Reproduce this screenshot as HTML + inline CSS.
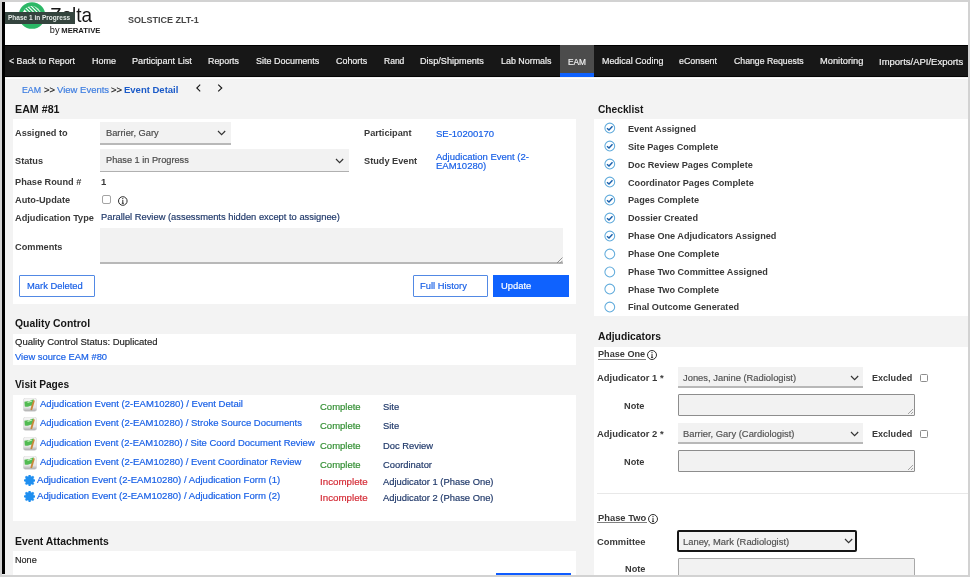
<!DOCTYPE html>
<html><head><meta charset="utf-8"><style>
*{margin:0;padding:0;box-sizing:border-box}
html,body{width:970px;height:577px;overflow:hidden;background:#d2d2d2;font-family:"Liberation Sans",sans-serif}
.t{position:absolute;white-space:nowrap;line-height:1;will-change:transform}
.b{position:absolute}
</style></head>
<body>
<div class="b" style="left:2px;top:2px;width:966px;height:573px;background:#f3f3f3;overflow:hidden"></div><div class="b" style="left:2px;top:2px;width:966px;height:43px;background:#fff"></div><div class="b" style="left:2px;top:2px;width:3px;height:572px;background:#000;z-index:5"></div><svg class="b" style="left:0;top:0;will-change:transform" width="120" height="45" viewBox="0 0 120 45">
<defs><clipPath id="cp"><rect x="2" y="2" width="118" height="43"/></clipPath>
<clipPath id="dome"><ellipse cx="31.8" cy="15" rx="9.3" ry="9"/></clipPath></defs>
<g clip-path="url(#cp)">
<circle cx="32" cy="15.5" r="13.3" fill="#2cb866"/>
<g clip-path="url(#dome)"><rect x="20" y="5" width="24" height="20" fill="#fff"/>
<path d="M20 4 L30 14 M23.6 4 L33.6 14 M27.2 4 L37.2 14 M30.8 4 L40.8 14 M34.4 4 L44.4 14" stroke="#2cb866" stroke-width="1.5"/></g>
<text x="49.9" y="21.5" font-family="Liberation Sans" font-size="20.8" fill="#161616" textLength="42.2" lengthAdjust="spacingAndGlyphs">Zelta</text>
<text x="49.8" y="32.8" font-family="Liberation Sans" font-size="9.2" fill="#111">by</text>
<text x="61.3" y="32.9" font-family="Liberation Sans" font-size="6.5" font-weight="bold" fill="#1a1a1a" textLength="39.1" lengthAdjust="spacingAndGlyphs">MERATIVE</text>
</g></svg><div class="b" style="left:4.9px;top:11.9px;width:70px;height:12px;background:#34443e;z-index:6"></div><div class="t" style="left:8.4px;top:14.50px;font-size:6.5px;font-weight:bold;color:#e6ebe8;z-index:7">Phase 1 in Progress</div>
<div class="t" style="left:127.9px;top:15.98px;font-size:9px;font-weight:bold;color:#454545;">SOLSTICE ZLT-1</div>
<div class="b" style="left:2px;top:44.6px;width:966px;height:32.8px;background:#171717;border-top:1px solid #000;border-bottom:1px solid #050505"></div><div class="b" style="left:2px;top:77.6px;width:966px;height:1.2px;background:#fff"></div><div class="b" style="left:560px;top:45px;width:34px;height:32px;background:#4c4c4c"></div><div class="b" style="left:560px;top:73px;width:34px;height:4px;background:#0f62fe"></div><div class="t" style="left:9px;top:57.13px;font-size:8.83px;-webkit-text-stroke:0.18px currentColor;color:#f0f0f0;">&lt; Back to Report</div>
<div class="t" style="left:91.5px;top:56.98px;font-size:9.0px;-webkit-text-stroke:0.18px currentColor;color:#f0f0f0;">Home</div>
<div class="t" style="left:132px;top:56.85px;font-size:9.15px;-webkit-text-stroke:0.18px currentColor;color:#f0f0f0;">Participant List</div>
<div class="t" style="left:208.2px;top:57.11px;font-size:8.85px;-webkit-text-stroke:0.18px currentColor;color:#f0f0f0;">Reports</div>
<div class="t" style="left:255.8px;top:57.00px;font-size:8.98px;-webkit-text-stroke:0.18px currentColor;color:#f0f0f0;">Site Documents</div>
<div class="t" style="left:335.7px;top:57.03px;font-size:8.94px;-webkit-text-stroke:0.18px currentColor;color:#f0f0f0;">Cohorts</div>
<div class="t" style="left:383.6px;top:57.38px;font-size:8.53px;-webkit-text-stroke:0.18px currentColor;color:#f0f0f0;">Rand</div>
<div class="t" style="left:420.2px;top:56.86px;font-size:9.14px;-webkit-text-stroke:0.18px currentColor;color:#f0f0f0;">Disp/Shipments</div>
<div class="t" style="left:500.7px;top:57.06px;font-size:8.91px;-webkit-text-stroke:0.18px currentColor;color:#f0f0f0;">Lab Normals</div>
<div class="t" style="left:568px;top:57.57px;font-size:8.31px;-webkit-text-stroke:0.18px currentColor;color:#f0f0f0;">EAM</div>
<div class="t" style="left:601.8px;top:57.06px;font-size:8.91px;-webkit-text-stroke:0.18px currentColor;color:#f0f0f0;">Medical Coding</div>
<div class="t" style="left:679.3px;top:57.08px;font-size:8.88px;-webkit-text-stroke:0.18px currentColor;color:#f0f0f0;">eConsent</div>
<div class="t" style="left:733.8px;top:57.23px;font-size:8.71px;-webkit-text-stroke:0.18px currentColor;color:#f0f0f0;">Change Requests</div>
<div class="t" style="left:819.5px;top:56.71px;font-size:9.32px;-webkit-text-stroke:0.18px currentColor;color:#f0f0f0;">Monitoring</div>
<div class="t" style="left:879px;top:56.58px;font-size:9.48px;-webkit-text-stroke:0.18px currentColor;color:#f0f0f0;">Imports/API/Exports</div>
<div class="t" style="left:22.3px;top:85.95px;font-size:8.8px;-webkit-text-stroke:0.18px currentColor;color:#3d7de0;">EAM</div>
<div class="t" style="left:43.7px;top:85.36px;font-size:9.5px;-webkit-text-stroke:0.18px currentColor;color:#262626;">&gt;&gt;</div>
<div class="t" style="left:56.7px;top:85.36px;font-size:9.5px;-webkit-text-stroke:0.18px currentColor;color:#3d7de0;">View Events</div>
<div class="t" style="left:110.8px;top:85.36px;font-size:9.5px;-webkit-text-stroke:0.18px currentColor;color:#262626;">&gt;&gt;</div>
<div class="t" style="left:124px;top:85.36px;font-size:9.5px;font-weight:bold;color:#1a5ac8;">Event Detail</div>
<svg class="b" style="left:194px;top:83px" width="32" height="12"><path d="M6.2 1.6 L2.8 5 L6.2 8.4 M24.2 1.6 L27.8 5 L24.2 8.4" stroke="#161616" stroke-width="1.1" fill="none"/></svg><div class="t" style="left:15.2px;top:104.04px;font-size:10.7px;font-weight:bold;color:#161616;">EAM #81</div>
<div class="b" style="left:13px;top:118.5px;width:562.5px;height:185px;background:#fff"></div><div class="t" style="left:15.2px;top:128.51px;font-size:9.2px;font-weight:bold;color:#393939;">Assigned to</div>
<div class="b" style="left:100px;top:121.5px;width:131px;height:23px;background:#f2f2f2;border-bottom:2px solid #b8b8b8"></div><div class="t" style="left:106px;top:128.63px;font-size:9.3px;-webkit-text-stroke:0.18px currentColor;color:#4a4a4a;">Barrier, Gary</div>
<svg class="b" style="left:217px;top:130px" width="10" height="7"><path d="M1 1 L4.6 4.6 L8.2 1" stroke="#333" stroke-width="1.15" fill="none"/></svg><div class="t" style="left:15.2px;top:156.51px;font-size:9.2px;font-weight:bold;color:#393939;">Status</div>
<div class="b" style="left:100px;top:149.3px;width:248.5px;height:22.7px;background:#f2f2f2;border-bottom:1.5px solid #b0b0b0"></div><div class="t" style="left:106px;top:156.41px;font-size:9.2px;-webkit-text-stroke:0.18px currentColor;color:#4a4a4a;">Phase 1 in Progress</div>
<svg class="b" style="left:335px;top:157.5px" width="10" height="7"><path d="M1 1 L4.6 4.6 L8.2 1" stroke="#333" stroke-width="1.15" fill="none"/></svg><div class="t" style="left:363.5px;top:129.41px;font-size:9.2px;font-weight:bold;color:#393939;">Participant</div>
<div class="t" style="left:436px;top:128.56px;font-size:9.5px;-webkit-text-stroke:0.18px currentColor;color:#175fe6;">SE-10200170</div>
<div class="t" style="left:363.5px;top:157.31px;font-size:9.2px;font-weight:bold;color:#393939;">Study Event</div>
<div class="t" style="left:436px;top:151.96px;font-size:9.5px;-webkit-text-stroke:0.18px currentColor;color:#175fe6;">Adjudication Event (2-</div>
<div class="t" style="left:436px;top:160.66px;font-size:9.5px;-webkit-text-stroke:0.18px currentColor;color:#175fe6;">EAM10280)</div>
<div class="t" style="left:15.2px;top:177.71px;font-size:9.2px;font-weight:bold;color:#393939;">Phase Round #</div>
<div class="t" style="left:100.7px;top:177.46px;font-size:9.5px;font-weight:bold;color:#393939;">1</div>
<div class="t" style="left:15.2px;top:196.01px;font-size:9.2px;font-weight:bold;color:#393939;">Auto-Update</div>
<div class="b" style="left:102.2px;top:195px;width:8.7px;height:8.7px;border:1px solid #a4a4a4;border-radius:2px;background:#fff"></div><svg class="b" style="left:117px;top:195px" width="12" height="12"><circle cx="5.8" cy="6" r="4.3" stroke="#161616" stroke-width="0.9" fill="none"/><path d="M5.8 4.9 V8.2 M4.8 8.3 H6.9" stroke="#161616" stroke-width="0.9"/><circle cx="5.8" cy="3.6" r="0.6" fill="#161616"/></svg><div class="t" style="left:15.2px;top:213.71px;font-size:9.2px;font-weight:bold;color:#393939;">Adjudication Type</div>
<div class="t" style="left:100.7px;top:212.98px;font-size:9.36px;-webkit-text-stroke:0.18px currentColor;color:#20396a;">Parallel Review (assessments hidden except to assignee)</div>
<div class="t" style="left:15.2px;top:242.61px;font-size:9.2px;font-weight:bold;color:#393939;">Comments</div>
<div class="b" style="left:100px;top:227.6px;width:462.8px;height:36.2px;background:#f2f2f2;border-bottom:2px solid #b8b8b8"></div><svg class="b" style="left:555px;top:256px" width="8" height="8"><path d="M7.5 1.5 L2 7 M7.5 4.8 L5 7.3" stroke="#888" stroke-width="0.9"/></svg><div class="b" style="left:19.2px;top:274.5px;width:75.7px;height:22px;border:1px solid #5289e4;border-radius:1px;background:#fff"></div><div class="t" style="left:26.5px;top:281.34px;font-size:9.4px;-webkit-text-stroke:0.18px currentColor;color:#175fe6;">Mark Deleted</div>
<div class="b" style="left:412.6px;top:274.5px;width:75.4px;height:22px;border:1px solid #5289e4;border-radius:1px;background:#fff"></div><div class="t" style="left:420.4px;top:281.34px;font-size:9.4px;-webkit-text-stroke:0.18px currentColor;color:#175fe6;">Full History</div>
<div class="b" style="left:493.2px;top:274.8px;width:75.7px;height:21.8px;background:#0f62fe"></div><div class="t" style="left:500.8px;top:281.34px;font-size:9.4px;-webkit-text-stroke:0.18px currentColor;color:#fff;">Update</div>
<div class="t" style="left:15.3px;top:319.10px;font-size:10.4px;font-weight:bold;color:#161616;">Quality Control</div>
<div class="b" style="left:13px;top:334px;width:562.5px;height:30.5px;background:#fff"></div><div class="t" style="left:15.3px;top:337.46px;font-size:9.5px;-webkit-text-stroke:0.18px currentColor;color:#262626;">Quality Control Status: Duplicated</div>
<div class="t" style="left:15.3px;top:352.34px;font-size:9.4px;-webkit-text-stroke:0.18px currentColor;color:#175fe6;">View source EAM #80</div>
<div class="t" style="left:15.3px;top:380.17px;font-size:10.2px;font-weight:bold;color:#161616;">Visit Pages</div>
<div class="b" style="left:13px;top:394.5px;width:562.5px;height:126.3px;background:#fff"></div><svg class="b" style="left:23.2px;top:398px" width="14" height="14" viewBox="0 0 14 14"><defs><linearGradient id="fg398" x1="0" y1="0" x2="0" y2="1"><stop offset="0" stop-color="#f6f6f6"/><stop offset="0.7" stop-color="#e6e6e6"/><stop offset="1" stop-color="#aaaaaa"/></linearGradient></defs><rect x="0.4" y="0.2" width="13.2" height="13.1" rx="2" fill="url(#fg398)" stroke="#cfcfcf" stroke-width="0.5"/><path d="M1.4 3.8 Q4 2.8 6 3.4 Q8.2 1.8 10.8 1.6 L9.6 7.6 Q7.5 7.6 5.6 8.6 Q3.5 8.8 1.8 8.4 Z" fill="#52bb52"/><path d="M4.5 4.6 Q7 3.6 9 3" stroke="#c0f0b8" stroke-width="1.1" fill="none"/><path d="M10.6 1.8 Q12 2.2 11.6 3.6 L9.2 11.8 Q8.4 12.6 7.4 11.8 L8.6 7 Z" fill="#c9873a"/></svg><div class="t" style="left:39.7px;top:398.62px;font-size:9.54px;-webkit-text-stroke:0.18px currentColor;color:#175fe6;">Adjudication Event (2-EAM10280) / Event Detail</div>
<div class="t" style="left:320.1px;top:401.76px;font-size:9.5px;-webkit-text-stroke:0.18px currentColor;color:#338f33;">Complete</div>
<div class="t" style="left:383.2px;top:401.84px;font-size:9.4px;-webkit-text-stroke:0.18px currentColor;color:#20396a;">Site</div>
<svg class="b" style="left:23.2px;top:417px" width="14" height="14" viewBox="0 0 14 14"><defs><linearGradient id="fg417" x1="0" y1="0" x2="0" y2="1"><stop offset="0" stop-color="#f6f6f6"/><stop offset="0.7" stop-color="#e6e6e6"/><stop offset="1" stop-color="#aaaaaa"/></linearGradient></defs><rect x="0.4" y="0.2" width="13.2" height="13.1" rx="2" fill="url(#fg417)" stroke="#cfcfcf" stroke-width="0.5"/><path d="M1.4 3.8 Q4 2.8 6 3.4 Q8.2 1.8 10.8 1.6 L9.6 7.6 Q7.5 7.6 5.6 8.6 Q3.5 8.8 1.8 8.4 Z" fill="#52bb52"/><path d="M4.5 4.6 Q7 3.6 9 3" stroke="#c0f0b8" stroke-width="1.1" fill="none"/><path d="M10.6 1.8 Q12 2.2 11.6 3.6 L9.2 11.8 Q8.4 12.6 7.4 11.8 L8.6 7 Z" fill="#c9873a"/></svg><div class="t" style="left:39.7px;top:417.76px;font-size:9.5px;-webkit-text-stroke:0.18px currentColor;color:#175fe6;">Adjudication Event (2-EAM10280) / Stroke Source Documents</div>
<div class="t" style="left:320.1px;top:421.06px;font-size:9.5px;-webkit-text-stroke:0.18px currentColor;color:#338f33;">Complete</div>
<div class="t" style="left:383.2px;top:421.14px;font-size:9.4px;-webkit-text-stroke:0.18px currentColor;color:#20396a;">Site</div>
<svg class="b" style="left:23.2px;top:436.6px" width="14" height="14" viewBox="0 0 14 14"><defs><linearGradient id="fg436" x1="0" y1="0" x2="0" y2="1"><stop offset="0" stop-color="#f6f6f6"/><stop offset="0.7" stop-color="#e6e6e6"/><stop offset="1" stop-color="#aaaaaa"/></linearGradient></defs><rect x="0.4" y="0.2" width="13.2" height="13.1" rx="2" fill="url(#fg436)" stroke="#cfcfcf" stroke-width="0.5"/><path d="M1.4 3.8 Q4 2.8 6 3.4 Q8.2 1.8 10.8 1.6 L9.6 7.6 Q7.5 7.6 5.6 8.6 Q3.5 8.8 1.8 8.4 Z" fill="#52bb52"/><path d="M4.5 4.6 Q7 3.6 9 3" stroke="#c0f0b8" stroke-width="1.1" fill="none"/><path d="M10.6 1.8 Q12 2.2 11.6 3.6 L9.2 11.8 Q8.4 12.6 7.4 11.8 L8.6 7 Z" fill="#c9873a"/></svg><div class="t" style="left:39.7px;top:437.68px;font-size:9.47px;-webkit-text-stroke:0.18px currentColor;color:#175fe6;">Adjudication Event (2-EAM10280) / Site Coord Document Review</div>
<div class="t" style="left:320.1px;top:440.66px;font-size:9.5px;-webkit-text-stroke:0.18px currentColor;color:#338f33;">Complete</div>
<div class="t" style="left:383.2px;top:440.74px;font-size:9.4px;-webkit-text-stroke:0.18px currentColor;color:#20396a;">Doc Review</div>
<svg class="b" style="left:23.2px;top:456px" width="14" height="14" viewBox="0 0 14 14"><defs><linearGradient id="fg456" x1="0" y1="0" x2="0" y2="1"><stop offset="0" stop-color="#f6f6f6"/><stop offset="0.7" stop-color="#e6e6e6"/><stop offset="1" stop-color="#aaaaaa"/></linearGradient></defs><rect x="0.4" y="0.2" width="13.2" height="13.1" rx="2" fill="url(#fg456)" stroke="#cfcfcf" stroke-width="0.5"/><path d="M1.4 3.8 Q4 2.8 6 3.4 Q8.2 1.8 10.8 1.6 L9.6 7.6 Q7.5 7.6 5.6 8.6 Q3.5 8.8 1.8 8.4 Z" fill="#52bb52"/><path d="M4.5 4.6 Q7 3.6 9 3" stroke="#c0f0b8" stroke-width="1.1" fill="none"/><path d="M10.6 1.8 Q12 2.2 11.6 3.6 L9.2 11.8 Q8.4 12.6 7.4 11.8 L8.6 7 Z" fill="#c9873a"/></svg><div class="t" style="left:39.7px;top:456.96px;font-size:9.5px;-webkit-text-stroke:0.18px currentColor;color:#175fe6;">Adjudication Event (2-EAM10280) / Event Coordinator Review</div>
<div class="t" style="left:320.1px;top:459.56px;font-size:9.5px;-webkit-text-stroke:0.18px currentColor;color:#338f33;">Complete</div>
<div class="t" style="left:383.2px;top:459.64px;font-size:9.4px;-webkit-text-stroke:0.18px currentColor;color:#20396a;">Coordinator</div>
<svg class="b" style="left:23.5px;top:474.9px" width="11.2" height="11" viewBox="0 0 11.2 11"><path d="M4.12 1.79 L4.93 -0.16 L6.27 -0.16 L7.08 1.79 L7.10 1.80 L9.06 0.99 L10.01 1.94 L9.20 3.90 L9.21 3.92 L11.16 4.73 L11.16 6.07 L9.21 6.88 L9.20 6.90 L10.01 8.86 L9.06 9.81 L7.10 9.00 L7.08 9.01 L6.27 10.96 L4.93 10.96 L4.12 9.01 L4.10 9.00 L2.14 9.81 L1.19 8.86 L2.00 6.90 L1.99 6.88 L0.04 6.07 L0.04 4.73 L1.99 3.92 L2.00 3.90 L1.19 1.94 L2.14 0.99 L4.10 1.80 Z" fill="#1f8ff0" stroke="#1f8ff0" stroke-width="0.3" stroke-linejoin="round"/></svg><div class="t" style="left:37.2px;top:474.98px;font-size:9.59px;-webkit-text-stroke:0.18px currentColor;color:#175fe6;">Adjudication Event (2-EAM10280) / Adjudication Form (1)</div>
<div class="t" style="left:320.1px;top:476.65px;font-size:9.75px;-webkit-text-stroke:0.18px currentColor;color:#d42a35;">Incomplete</div>
<div class="t" style="left:383.2px;top:476.74px;font-size:9.4px;-webkit-text-stroke:0.18px currentColor;color:#20396a;">Adjudicator 1 (Phase One)</div>
<svg class="b" style="left:23.5px;top:491.4px" width="11.2" height="11" viewBox="0 0 11.2 11"><path d="M4.12 1.79 L4.93 -0.16 L6.27 -0.16 L7.08 1.79 L7.10 1.80 L9.06 0.99 L10.01 1.94 L9.20 3.90 L9.21 3.92 L11.16 4.73 L11.16 6.07 L9.21 6.88 L9.20 6.90 L10.01 8.86 L9.06 9.81 L7.10 9.00 L7.08 9.01 L6.27 10.96 L4.93 10.96 L4.12 9.01 L4.10 9.00 L2.14 9.81 L1.19 8.86 L2.00 6.90 L1.99 6.88 L0.04 6.07 L0.04 4.73 L1.99 3.92 L2.00 3.90 L1.19 1.94 L2.14 0.99 L4.10 1.80 Z" fill="#1f8ff0" stroke="#1f8ff0" stroke-width="0.3" stroke-linejoin="round"/></svg><div class="t" style="left:37.2px;top:491.18px;font-size:9.59px;-webkit-text-stroke:0.18px currentColor;color:#175fe6;">Adjudication Event (2-EAM10280) / Adjudication Form (2)</div>
<div class="t" style="left:320.1px;top:493.25px;font-size:9.75px;-webkit-text-stroke:0.18px currentColor;color:#d42a35;">Incomplete</div>
<div class="t" style="left:383.2px;top:493.34px;font-size:9.4px;-webkit-text-stroke:0.18px currentColor;color:#20396a;">Adjudicator 2 (Phase One)</div>
<div class="t" style="left:15.3px;top:536.90px;font-size:10.4px;font-weight:bold;color:#161616;">Event Attachments</div>
<div class="b" style="left:13px;top:551px;width:562.5px;height:30px;background:#fff"></div><div class="t" style="left:15.3px;top:555.70px;font-size:9.1px;-webkit-text-stroke:0.18px currentColor;color:#262626;">None</div>
<div class="b" style="left:496px;top:573.2px;width:75px;height:2px;background:#0f5cff"></div><div class="t" style="left:597.5px;top:104.77px;font-size:10.2px;font-weight:bold;color:#161616;">Checklist</div>
<div class="b" style="left:594.4px;top:119px;width:374px;height:197px;background:#fff"></div><svg class="b" style="left:603px;top:122.10px" width="13" height="12"><circle cx="6.8" cy="6" r="4.9" stroke="#62acdc" stroke-width="1.05" fill="none"/><path d="M4.0 6.2 L6.0 8.0 L9.5 4.3" stroke="#1a60ac" stroke-width="1.45" fill="none"/></svg><div class="t" style="left:628.1px;top:125.05px;font-size:9.15px;font-weight:bold;color:#393939;">Event Assigned</div>
<svg class="b" style="left:603px;top:140.03px" width="13" height="12"><circle cx="6.8" cy="6" r="4.9" stroke="#62acdc" stroke-width="1.05" fill="none"/><path d="M4.0 6.2 L6.0 8.0 L9.5 4.3" stroke="#1a60ac" stroke-width="1.45" fill="none"/></svg><div class="t" style="left:628.1px;top:142.89px;font-size:9.15px;font-weight:bold;color:#393939;">Site Pages Complete</div>
<svg class="b" style="left:603px;top:157.96px" width="13" height="12"><circle cx="6.8" cy="6" r="4.9" stroke="#62acdc" stroke-width="1.05" fill="none"/><path d="M4.0 6.2 L6.0 8.0 L9.5 4.3" stroke="#1a60ac" stroke-width="1.45" fill="none"/></svg><div class="t" style="left:628.1px;top:160.73px;font-size:9.15px;font-weight:bold;color:#393939;">Doc Review Pages Complete</div>
<svg class="b" style="left:603px;top:175.89px" width="13" height="12"><circle cx="6.8" cy="6" r="4.9" stroke="#62acdc" stroke-width="1.05" fill="none"/><path d="M4.0 6.2 L6.0 8.0 L9.5 4.3" stroke="#1a60ac" stroke-width="1.45" fill="none"/></svg><div class="t" style="left:628.1px;top:178.57px;font-size:9.15px;font-weight:bold;color:#393939;">Coordinator Pages Complete</div>
<svg class="b" style="left:603px;top:193.82px" width="13" height="12"><circle cx="6.8" cy="6" r="4.9" stroke="#62acdc" stroke-width="1.05" fill="none"/><path d="M4.0 6.2 L6.0 8.0 L9.5 4.3" stroke="#1a60ac" stroke-width="1.45" fill="none"/></svg><div class="t" style="left:628.1px;top:196.41px;font-size:9.15px;font-weight:bold;color:#393939;">Pages Complete</div>
<svg class="b" style="left:603px;top:211.75px" width="13" height="12"><circle cx="6.8" cy="6" r="4.9" stroke="#62acdc" stroke-width="1.05" fill="none"/><path d="M4.0 6.2 L6.0 8.0 L9.5 4.3" stroke="#1a60ac" stroke-width="1.45" fill="none"/></svg><div class="t" style="left:628.1px;top:214.25px;font-size:9.15px;font-weight:bold;color:#393939;">Dossier Created</div>
<svg class="b" style="left:603px;top:229.68px" width="13" height="12"><circle cx="6.8" cy="6" r="4.9" stroke="#62acdc" stroke-width="1.05" fill="none"/><path d="M4.0 6.2 L6.0 8.0 L9.5 4.3" stroke="#1a60ac" stroke-width="1.45" fill="none"/></svg><div class="t" style="left:628.1px;top:232.09px;font-size:9.15px;font-weight:bold;color:#393939;">Phase One Adjudicators Assigned</div>
<svg class="b" style="left:603px;top:247.61px" width="13" height="12"><circle cx="6.8" cy="6" r="4.9" stroke="#62acdc" stroke-width="1.05" fill="none"/></svg><div class="t" style="left:628.1px;top:249.93px;font-size:9.15px;font-weight:bold;color:#393939;">Phase One Complete</div>
<svg class="b" style="left:603px;top:265.54px" width="13" height="12"><circle cx="6.8" cy="6" r="4.9" stroke="#62acdc" stroke-width="1.05" fill="none"/></svg><div class="t" style="left:628.1px;top:267.77px;font-size:9.15px;font-weight:bold;color:#393939;">Phase Two Committee Assigned</div>
<svg class="b" style="left:603px;top:283.47px" width="13" height="12"><circle cx="6.8" cy="6" r="4.9" stroke="#62acdc" stroke-width="1.05" fill="none"/></svg><div class="t" style="left:628.1px;top:285.61px;font-size:9.15px;font-weight:bold;color:#393939;">Phase Two Complete</div>
<svg class="b" style="left:603px;top:301.40px" width="13" height="12"><circle cx="6.8" cy="6" r="4.9" stroke="#62acdc" stroke-width="1.05" fill="none"/></svg><div class="t" style="left:628.1px;top:303.45px;font-size:9.15px;font-weight:bold;color:#393939;">Final Outcome Generated</div>
<div class="t" style="left:597.6px;top:331.98px;font-size:10.3px;font-weight:bold;color:#161616;">Adjudicators</div>
<div class="b" style="left:594.4px;top:346.5px;width:374px;height:240px;background:#fff"></div><div class="t" style="left:597.5px;top:349.85px;font-size:9.15px;font-weight:bold;color:#393939;">Phase One</div>
<div class="b" style="left:597.5px;top:358.6px;width:48.5px;height:0.9px;background:#808080"></div><svg class="b" style="left:645.8px;top:348.9px" width="12" height="12"><circle cx="6" cy="6" r="4.5" stroke="#161616" stroke-width="0.9" fill="none"/><path d="M6 5 V8.3 M5 8.4 H7.1" stroke="#161616" stroke-width="0.9"/><circle cx="6" cy="3.7" r="0.6" fill="#161616"/></svg><div class="t" style="left:596.9px;top:373.40px;font-size:9.45px;font-weight:bold;color:#393939;">Adjudicator 1 *</div>
<div class="b" style="left:678px;top:366.5px;width:185px;height:21.5px;background:#f2f2f2;border-bottom:2px solid #b8b8b8"></div><div class="t" style="left:683.1px;top:373.04px;font-size:9.4px;-webkit-text-stroke:0.18px currentColor;color:#525252;">Jones, Janine (Radiologist)</div>
<svg class="b" style="left:850px;top:374.5px" width="10" height="7"><path d="M1 1 L4.6 4.6 L8.2 1" stroke="#333" stroke-width="1.15" fill="none"/></svg><div class="t" style="left:871.8px;top:373.94px;font-size:9.05px;font-weight:bold;color:#393939;">Excluded</div>
<div class="b" style="left:920.2px;top:373.5px;width:7.8px;height:8.2px;border:1px solid #8d8d8d;border-radius:1.5px;background:#fff"></div><div class="t" style="left:624.3px;top:401.81px;font-size:9.2px;font-weight:bold;color:#393939;">Note</div>
<div class="b" style="left:677.6px;top:394px;width:237px;height:21.5px;background:#f2f2f2;border:1px solid #8d8d8d;border-radius:1px"></div><svg class="b" style="left:906px;top:407px" width="8" height="8"><path d="M7 2 L2 7 M7 5 L5 7" stroke="#8d8d8d" stroke-width="0.8"/></svg><div class="t" style="left:596.9px;top:429.20px;font-size:9.45px;font-weight:bold;color:#393939;">Adjudicator 2 *</div>
<div class="b" style="left:678px;top:422.9px;width:185px;height:21.5px;background:#f2f2f2;border-bottom:2px solid #b8b8b8"></div><div class="t" style="left:683.1px;top:429.44px;font-size:9.4px;-webkit-text-stroke:0.18px currentColor;color:#525252;">Barrier, Gary (Cardiologist)</div>
<svg class="b" style="left:850px;top:430.9px" width="10" height="7"><path d="M1 1 L4.6 4.6 L8.2 1" stroke="#333" stroke-width="1.15" fill="none"/></svg><div class="t" style="left:871.8px;top:430.34px;font-size:9.05px;font-weight:bold;color:#393939;">Excluded</div>
<div class="b" style="left:920.2px;top:429.9px;width:7.8px;height:8.2px;border:1px solid #8d8d8d;border-radius:1.5px;background:#fff"></div><div class="t" style="left:624.3px;top:458.21px;font-size:9.2px;font-weight:bold;color:#393939;">Note</div>
<div class="b" style="left:677.6px;top:450.4px;width:237px;height:21.5px;background:#f2f2f2;border:1px solid #8d8d8d;border-radius:1px"></div><svg class="b" style="left:906px;top:463.4px" width="8" height="8"><path d="M7 2 L2 7 M7 5 L5 7" stroke="#8d8d8d" stroke-width="0.8"/></svg><div class="b" style="left:597px;top:493px;width:371px;height:1px;background:#e8e8e8"></div><div class="t" style="left:597.5px;top:514.09px;font-size:9.35px;font-weight:bold;color:#393939;">Phase Two</div>
<div class="b" style="left:597.3px;top:522.1px;width:49.5px;height:0.9px;background:#808080"></div><svg class="b" style="left:646.5px;top:513px" width="12" height="12"><circle cx="6" cy="6" r="4.5" stroke="#161616" stroke-width="0.9" fill="none"/><path d="M6 5 V8.3 M5 8.4 H7.1" stroke="#161616" stroke-width="0.9"/><circle cx="6" cy="3.7" r="0.6" fill="#161616"/></svg><div class="t" style="left:597px;top:536.74px;font-size:9.4px;font-weight:bold;color:#393939;">Committee</div>
<div class="b" style="left:677.4px;top:529.9px;width:180px;height:22.4px;background:#f2f2f2;border:2px solid #161616;border-radius:2px"></div><div class="t" style="left:683.3px;top:536.84px;font-size:9.4px;-webkit-text-stroke:0.18px currentColor;color:#525252;">Laney, Mark (Radiologist)</div>
<svg class="b" style="left:843.5px;top:538px" width="10" height="7"><path d="M1 1 L4.6 4.6 L8.2 1" stroke="#333" stroke-width="1.15" fill="none"/></svg><div class="t" style="left:624.5px;top:565.21px;font-size:9.2px;font-weight:bold;color:#393939;">Note</div>
<div class="b" style="left:677.6px;top:557.8px;width:237px;height:30px;background:#f2f2f2;border:1px solid #a8a8a8;border-radius:1px"></div><div class="b" style="left:0;top:575px;width:970px;height:2px;background:#d2d2d2;z-index:10"></div><div class="b" style="left:968px;top:0;width:2px;height:577px;background:#d2d2d2;z-index:10"></div><div class="b" style="left:0;top:0;width:970px;height:2px;background:#d2d2d2;z-index:10"></div><div class="b" style="left:0;top:0;width:2px;height:577px;background:#d2d2d2;z-index:10"></div>
</body></html>
